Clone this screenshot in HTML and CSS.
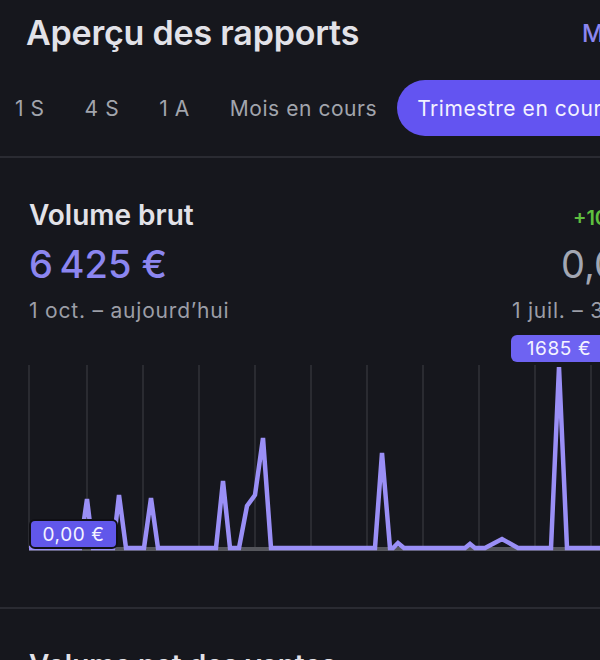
FILE: index.html
```html
<!DOCTYPE html>
<html lang="fr">
<head>
<meta charset="utf-8">
<title>Aperçu des rapports</title>
<link rel="stylesheet" href="styles.css">
</head>
<body>
<div class="screen">
  <header class="header">
    <h1 class="title">Aperçu des rapports</h1>
    <a class="edit">Modifier</a>
  </header>

  <nav class="tabs">
    <span class="tab">1 S</span>
    <span class="tab">4 S</span>
    <span class="tab">1 A</span>
    <span class="tab">Mois en cours</span>
    <span class="tab active">Trimestre en cours</span>
  </nav>

  <section class="report">
    <div class="row">
      <h2 class="label">Volume brut</h2>
      <span class="delta">+100,00 %</span>
    </div>
    <div class="row">
      <span class="value">6&#8239;425&nbsp;€</span>
      <span class="value prev">0,00&nbsp;€</span>
    </div>
    <div class="row">
      <span class="range">1 oct. – aujourd’hui</span>
      <span class="range">1 juil. – 30 sept.</span>
    </div>

    <div class="chart">
      <svg class="chart-svg" width="704" height="230" viewBox="0 0 704 230">
        <g class="grid">
          <line x1="29" y1="34" x2="29" y2="217"/>
          <line x1="87" y1="34" x2="87" y2="217"/>
          <line x1="143" y1="34" x2="143" y2="217"/>
          <line x1="199" y1="34" x2="199" y2="217"/>
          <line x1="255" y1="34" x2="255" y2="217"/>
          <line x1="311" y1="34" x2="311" y2="217"/>
          <line x1="367" y1="34" x2="367" y2="217"/>
          <line x1="423" y1="34" x2="423" y2="217"/>
          <line x1="479" y1="34" x2="479" y2="217"/>
          <line x1="535" y1="34" x2="535" y2="217"/>
          <line x1="591" y1="34" x2="591" y2="217"/>
          <line x1="647" y1="34" x2="647" y2="217"/>
        </g>
        <line class="base" x1="29" y1="218" x2="704" y2="218"/>
        <path class="series" d="M29,217 L80,217 L87,168 L93,217 L113,217 L119,164 L126,217 L144,217 L151,167 L158,217 L216,217 L223,150 L230,217 L239,217 L247,175 L255,164 L263,107 L271,217 L375,217 L382,122 L390,217 L393,217 L398,212 L404,217 L465,217 L470,213 L475,217 L485,217 L502,208 L518,217 L551,217 L559,36 L567,217 L704,217"/>
      </svg>
      <span class="tip tip-start">0,00&nbsp;€</span>
      <span class="tip tip-peak">1685&nbsp;€</span>
    </div>
  </section>

  <section class="report next">
    <div class="row">
      <h2 class="label">Volume net des ventes</h2>
      <span class="delta">+100,00 %</span>
    </div>
  </section>
</div>
</body>
</html>
```

FILE: styles.css
```css
html, body {
  margin: 0;
  padding: 0;
  background: #16171d;
  overflow: hidden;
}

body {
  width: 600px;
  height: 660px;
  font-family: Inter, "Noto Sans", sans-serif;
  color: #e4e4ea;
}

.screen {
  width: 704px;
}

.header {
  display: flex;
  align-items: center;
  justify-content: space-between;
  padding: 13px 26px 0 26px;
  height: 40px;
}

.title {
  margin: 0;
  font-size: 34px;
  line-height: 40px;
  font-weight: 600;
  color: #e2e2e8;
  letter-spacing: -0.2px;
}

.edit {
  font-size: 24px;
  font-weight: 500;
  color: #8c86f0;
}

.tabs {
  display: flex;
  align-items: center;
  margin: 27px 0 0 -5px;
  white-space: nowrap;
}

.tab {
  display: flex;
  align-items: center;
  height: 56px;
  padding: 0 20px;
  font-size: 21px;
  letter-spacing: 0.55px;
  color: #a2a5ad;
  border-radius: 28px;
}

.tab.active {
  background: #6354f1;
  color: #f3f2ff;
}

.report {
  border-top: 2px solid #2a2b32;
  margin-top: 20px;
  padding: 41px 26px 0 29px;
}

.row {
  display: flex;
  justify-content: space-between;
  align-items: baseline;
  white-space: nowrap;
}

.label {
  margin: 0;
  font-size: 28px;
  line-height: 32px;
  font-weight: 600;
  color: #e2e2e8;
}

.delta {
  font-size: 20px;
  font-weight: 600;
  color: #5fbf3f;
}

.value {
  margin-top: 11px;
  font-size: 38px;
  line-height: 44px;
  font-weight: 500;
  letter-spacing: 0.4px;
  color: #8c86f0;
}

.value.prev {
  color: #a3a7b3;
  font-weight: 400;
  letter-spacing: 0;
}

.range {
  margin-top: 13px;
  font-size: 21px;
  line-height: 24px;
  letter-spacing: 0.8px;
  color: #9c9ea7;
}

.chart {
  position: relative;
  margin: 8px 0 0 -29px;
  height: 230px;
}

.chart-svg {
  display: block;
}

.grid line {
  stroke: #2a2b31;
  stroke-width: 2;
}

.base {
  stroke: #55565c;
  stroke-width: 4;
}

.series {
  fill: none;
  stroke: #9a8ff6;
  stroke-width: 4.5;
  stroke-linejoin: miter;
  stroke-miterlimit: 6;
}

.tip {
  position: absolute;
  display: flex;
  align-items: center;
  justify-content: center;
  font-size: 19px;
  letter-spacing: 0.6px;
  color: #f4f3ff;
  border-radius: 6px;
  box-sizing: border-box;
}

.tip-start {
  left: 29px;
  top: 188px;
  width: 89px;
  height: 30px;
  background: #6157ea;
  border: 2px solid #101015;
}

.tip-peak {
  left: 511px;
  top: 4px;
  width: 96px;
  height: 27px;
  background: #6e63f2;
}

.report.next {
  margin-top: 46px;
  padding-top: 40px;
}
```
